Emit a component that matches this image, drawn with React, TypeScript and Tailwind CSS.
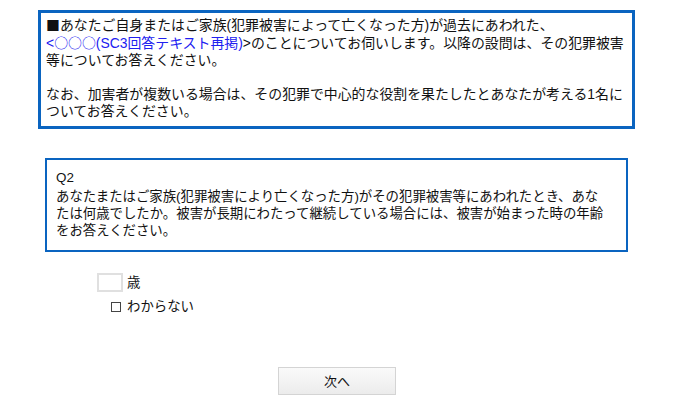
import React from "react";

const FONT = { fontFamily: '"Liberation Sans", "Noto Sans CJK JP", sans-serif' };

function Cjk({ children }: { children: React.ReactNode }) {
  return <span className="font-['Noto_Sans_CJK_JP',sans-serif]">{children}</span>;
}

export default function App() {
  return (
    <div className="min-h-[407px] w-[676px] bg-white text-[13.4px] leading-[17px] text-[#111]" style={FONT}>
      <div className="pt-[10px] pl-[38px]">
        <div className="w-[597px] h-[119px] border-[3px] border-[#0a64c0] px-[5px] pt-[3px] text-[13.9px] whitespace-nowrap">
          <p>
            <Cjk>■</Cjk>あなたご自身またはご家族(犯罪被害によって亡くなった方)が過去にあわれた、
          </p>
          <p>
            <span className="text-[#2020f0]">
              &lt;<Cjk>○○○</Cjk>(SC3回答テキスト再掲)
            </span>
            &gt;のことについてお伺いします。以降の設問は、その犯罪被害
          </p>
          <p>等についてお答えください。</p>
          <p>&nbsp;</p>
          <p>なお、加害者が複数いる場合は、その犯罪で中心的な役割を果たしたとあなたが考える1名に</p>
          <p>ついてお答えください。</p>
        </div>
      </div>

      <div className="pt-[29px] pl-[45px]">
        <div className="w-[583px] h-[94px] border-2 border-[#0a64c0] pl-[9px] pt-[9px] whitespace-nowrap">
          <p className="mb-[2px]">Q2</p>
          <p>あなたまたはご家族(犯罪被害により亡くなった方)がその犯罪被害等にあわれたとき、あな</p>
          <p>たは何歳でしたか。被害が長期にわたって継続している場合には、被害が始まった時の年齢</p>
          <p>をお答えください。</p>
        </div>
      </div>

      <div className="pl-[97px] pt-[21px]">
        <div className="flex items-center gap-[4px]">
          <div className="w-[26px] h-[19px] border-2 border-[#e0e0e0] bg-white" />
          <span>歳</span>
        </div>
        <label className="mt-[6px] ml-[14px] flex items-center gap-[6px]">
          <span className="w-[10px] h-[10px] border border-[#444] bg-white" />
          <span>わからない</span>
        </label>
      </div>

      <div className="flex justify-center pt-[52px] pr-[2px]">
        <button className="w-[118px] h-[28px] border border-[#d4d4d4] bg-gradient-to-b from-[#fafafa] to-[#ececec] text-[13px] text-[#111]">
          次へ
        </button>
      </div>
    </div>
  );
}
